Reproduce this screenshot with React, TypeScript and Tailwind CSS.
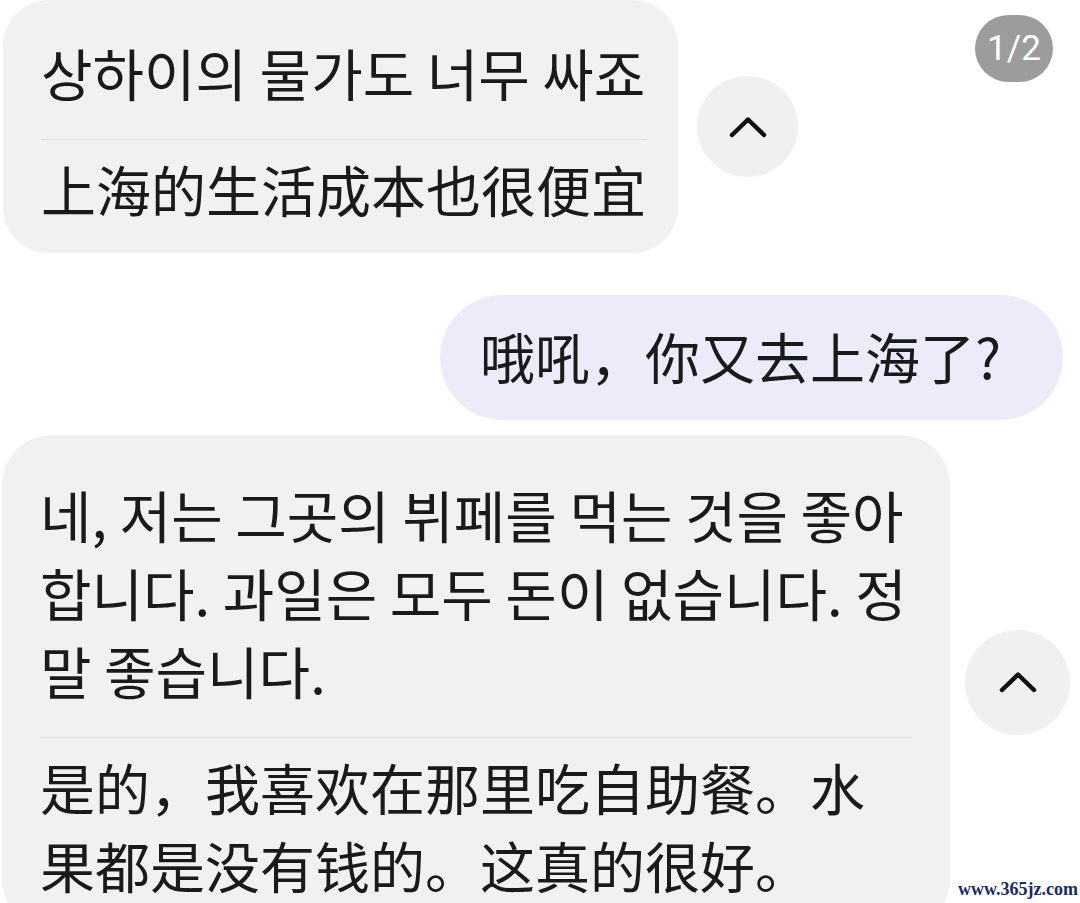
const KR = "font-['Noto_Sans_CJK_KR','Noto_Sans_CJK_SC',sans-serif]";
const SC = "font-['Noto_Sans_CJK_SC',sans-serif]";

function Chevron({ size }: { size: string }) {
  return (
    <button
      type="button"
      aria-label="접기"
      className={`flex shrink-0 items-center justify-center rounded-full bg-[#f0f0f0] ${size}`}
    >
      <svg width="40" height="24" viewBox="0 0 40 24" fill="none" aria-hidden>
        <polyline
          points="4,20 20,4.5 36,20"
          stroke="#111"
          strokeWidth="4.5"
          strokeLinecap="round"
          strokeLinejoin="round"
        />
      </svg>
    </button>
  );
}

export default function App() {
  return (
    <div className="relative h-[903px] w-[1080px] overflow-hidden bg-white text-[#1a1a1a]">
      {/* 첫 번째 메시지 (번역 포함) */}
      <div className="flex items-center gap-[19px] pl-[3px]">
        <div className="w-[675px] rounded-[46px] bg-[#f1f1f1] pb-[26px] pl-[38px] pr-[31px] pt-[33px]">
          <p className={`${KR} whitespace-nowrap text-[56px] leading-[78px]`}>
            상하이의 물가도 너무 싸죠
          </p>
          <div className="mb-[9px] mt-[28px] h-px bg-[#dddddd]" />
          <p className={`${SC} whitespace-nowrap text-[55px] leading-[78px]`}>
            上海的生活成本也很便宜
          </p>
        </div>
        <Chevron size="h-[101px] w-[101px]" />
      </div>

      {/* 내 메시지 */}
      <div className="mt-[42px] flex justify-end pr-[17px]">
        <div className="h-[125px] w-[623px] rounded-full bg-[#ecebf9] pl-[40px] pt-[21px]">
          <p className={`${SC} whitespace-nowrap text-[55px] leading-[78px]`}>
            哦吼，你又去上海了?
          </p>
        </div>
      </div>

      {/* 두 번째 답장 */}
      <div className="mt-[15px] flex items-center gap-[15px] pl-[2px]">
        <div className="w-[948px] rounded-[50px] bg-[#f1f1f1] pb-[26px] pl-[38px] pr-[38px] pt-[40px]">
          <div className={`${KR} whitespace-nowrap text-[56px] leading-[78px]`}>
            <p>네, 저는 그곳의 뷔페를 먹는 것을 좋아</p>
            <p>합니다. 과일은 모두 돈이 없습니다. 정</p>
            <p>말 좋습니다.</p>
          </div>
          <div className="mb-[9px] mt-[28px] h-px bg-[#dddddd]" />
          <div className={`${SC} whitespace-nowrap text-[55px] leading-[78px]`}>
            <p>是的，我喜欢在那里吃自助餐。水</p>
            <p>果都是没有钱的。这真的很好。</p>
          </div>
        </div>
        <Chevron size="h-[105px] w-[105px]" />
      </div>

      {/* 페이지 표시 */}
      <div className="absolute right-[27px] top-[15px] flex h-[67px] w-[78px] items-center justify-center rounded-full bg-[#9c9c9c]">
        <span className="font-['Roboto',sans-serif] text-[35px] leading-none text-white">1/2</span>
      </div>

      <span className="absolute left-[958px] top-[876px] font-['Liberation_Serif',serif] text-[18px] font-bold text-[#1c2b5c]">
        www.365jz.com
      </span>
    </div>
  );
}
